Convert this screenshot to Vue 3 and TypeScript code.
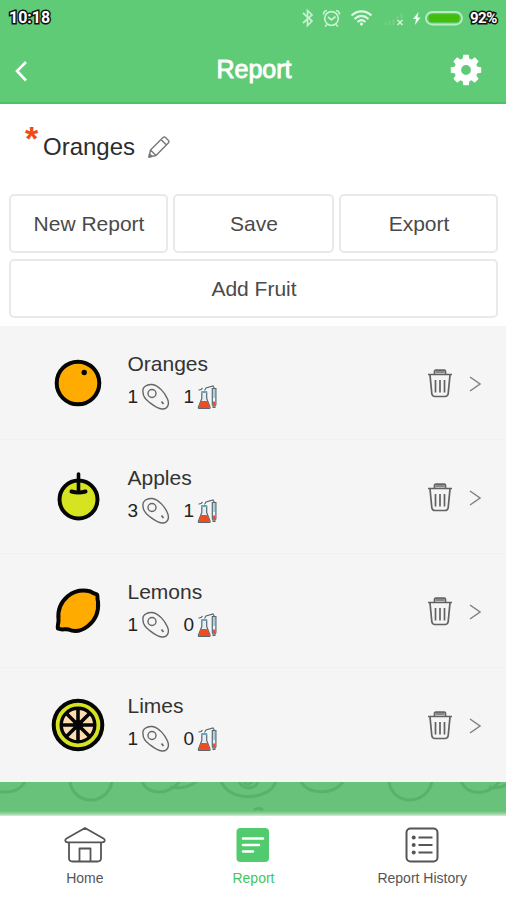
<script setup lang="ts">
type Kind = 'orange' | 'apple' | 'lemon' | 'lime'

interface FruitRow {
  name: string
  kind: Kind
  seeds: number
  tests: number
}

const rows: FruitRow[] = [
  { name: 'Oranges', kind: 'orange', seeds: 1, tests: 1 },
  { name: 'Apples', kind: 'apple', seeds: 3, tests: 1 },
  { name: 'Lemons', kind: 'lemon', seeds: 1, tests: 0 },
  { name: 'Limes', kind: 'lime', seeds: 1, tests: 0 },
]

const actions: string[] = ['New Report', 'Save', 'Export']
const teeth: number[] = [0, 45, 90, 135, 180, 225, 270, 315]
const spokes: number[] = [0, 45, 90, 135]
</script>

<template>
  <div class="screen">
    <header class="top">
      <div class="status">
        <span class="outlined time">10:18</span>
        <svg class="status-icons" width="168" height="24" viewBox="0 0 168 24" fill="none">
          <g stroke="#c9f2d0" stroke-width="1.7">
            <path d="M6 7l9 8-4.500 4.500v-15l4.500 4.500-9 8" transform="translate(-2 0)" />
            <circle cx="32.500" cy="12.500" r="6.800" />
            <path d="M29 11l3.500 3 4-3.500M24.500 8.500c0-2 1.500-3.700 3.500-4M40.500 8.500c0-2-1.500-3.700-3.500-4M28 18.500l-2 2M37 18.500l2 2" />
          </g>
          <g stroke="#dcf8e0" stroke-width="2.100">
            <path d="M52.500 9.500c6-5.500 14-5.500 20 0M55.500 13c4.500-4 9.500-4 14 0M58.500 16c2.500-2.300 5.500-2.300 8 0" />
            <circle cx="62.500" cy="18" r="1.200" fill="#dcf8e0" stroke-width="1" />
          </g>
          <path d="M86.500 19v-2.500M90.500 19v-4M94.500 19v-6M98.500 13v-3M102.500 12V7" stroke="#76d186" stroke-width="2" />
          <path d="M98.500 14l5 5m0-5l-5 5" stroke="#d4f5d9" stroke-width="1.500" />
          <path d="M119.500 6l-5.500 7h3l-1 6 5.500-7.500h-3z" fill="#effcf1" />
          <rect x="127" y="6" width="36" height="12.500" rx="6.200" stroke="#b9edc1" stroke-width="1.800" />
          <rect x="129.500" y="8.300" width="31" height="8" rx="3.500" fill="#43bd0b" />
        </svg>
        <span class="outlined battery">92%</span>
      </div>
      <div class="nav">
        <svg class="back" width="16" height="24" viewBox="0 0 16 24" fill="none" stroke="#fff" stroke-width="2.600">
          <path d="M13 3L4 12l9 9.500" />
        </svg>
        <h1>Report</h1>
        <svg class="gear" width="32" height="32" viewBox="-16 -16 32 32">
          <circle r="8.300" fill="none" stroke="#fff" stroke-width="6.800" />
          <path
            v-for="a in teeth"
            :key="a"
            d="M-3.600-10L-2.700-15.200H2.700L3.600-10z"
            fill="#fff"
            :transform="`rotate(${a})`"
          />
        </svg>
      </div>
    </header>

    <section class="report-name">
      <span class="star">*</span>
      <h2>Oranges</h2>
      <svg class="pencil" width="24" height="24" viewBox="0 0 24 24" fill="none" stroke="#777" stroke-width="1.400" stroke-linejoin="round">
        <path d="M2 22l1.500-7L16 2.500q1.200-1.200 2.500 0l3 3q1 1.200 0 2.300L9 20.500zM3.500 15l5.500 5.500M14 4.500l5.500 5.500" />
        <path d="M2 22l.6-3 2.400 2.400z" fill="#777" />
      </svg>
    </section>

    <section class="actions">
      <button v-for="label in actions" :key="label" type="button">{{ label }}</button>
      <button class="wide" type="button">Add Fruit</button>
    </section>

    <ul class="list">
      <li v-for="row in rows" :key="row.name">
        <svg class="fruit" width="56" height="60" viewBox="-28 -30 56 60" stroke="#050505" stroke-linecap="round" stroke-linejoin="round">
          <g v-if="row.kind === 'orange'">
            <circle cx="0" cy="0" r="21.300" fill="#ffab00" stroke-width="4" />
            <circle cx="6.200" cy="-10.500" r="2.700" fill="#050505" stroke="none" />
          </g>
          <g v-else-if="row.kind === 'apple'">
            <circle cx=".5" cy="2.500" r="19" fill="#d5e321" stroke-width="4" />
            <path d="M.5-23V-5" fill="none" stroke-width="3.600" />
            <path d="M-6.500-5.500q7 2 14 0" fill="none" stroke-width="4" />
          </g>
          <g v-else-if="row.kind === 'lemon'" stroke-width="4">
            <path
              d="M12.500-19.500C14.500-18 17-17.500 19-16.500C20-14 19-12 20-9.500C21 1 17 9.500 10 15C3 20.500-4 21-9.500 18.500C-13 17.500-16 19.500-20 17.500C-21 14.500-19 12-19.500 8C-20.500-2-16-10-10-15C-3-20.500 5-21.500 12.500-19.500z"
              fill="#ffab00"
            />
          </g>
          <g v-else>
            <circle r="24.300" fill="#d5e321" stroke-width="4" />
            <circle r="16.800" fill="#ffdcb0" stroke-width="3.400" />
            <path v-for="a in spokes" :key="a" d="M0-16V16" stroke-width="3.600" :transform="`rotate(${a})`" />
            <circle r="5" fill="#050505" stroke="none" />
          </g>
        </svg>
        <div class="info">
          <h3>{{ row.name }}</h3>
          <div class="counts">
            <span>{{ row.seeds }}</span>
            <svg class="seed" width="30" height="28" viewBox="0 0 30 28" fill="none" stroke="#666" stroke-width="1.400">
              <path d="M2 9C1 4 6 1 11 1.500C18 2.500 24 10 26.500 16C29 22 26 26.500 21 26C16 25.500 12 22 8 19C4 16 2 13 2 9z" />
              <circle cx="11" cy="10.500" r="4" />
              <path d="M20.500 18.500l2 2.500" stroke-width="1.700" />
            </svg>
            <span class="second">{{ row.tests }}</span>
            <svg class="lab" width="22" height="26" viewBox="0 0 22 26" fill="none">
              <path d="M4.800 8.500v6L1.500 23q-.5 1.500 1 1.500h9.500q1.500 0 1-1.500l-3.300-8.500v-6" fill="#e6edf0" stroke="#5a676f" stroke-width="1.200" />
              <path d="M4 17h6.500l2.300 6.300q0 .8-.8.800H2.500q-1 0-.6-1z" fill="#ef4d20" />
              <path d="M4.200 8h6" stroke="#68a5b8" stroke-width="2" />
              <path d="M1.500 6q3 .2 4-2M7.500 6.500L9 4l7-2 1.500 2.500" stroke="#53656d" stroke-width="1.100" />
              <path d="M15.300 4.500v16q0 1 .8 1v2h1.800v-2q1 0 1-1v-16z" fill="#f2f5f7" stroke="#5a676f" stroke-width="1.200" />
              <path d="M17.100 5v9" stroke="#84bdd0" stroke-width="1.300" />
              <path d="M17.100 17.500v4" stroke="#de4a36" stroke-width="2" />
            </svg>
          </div>
        </div>
        <svg class="trash" width="26" height="30" viewBox="0 0 26 30" fill="none" stroke="#626262" stroke-width="1.700" stroke-linejoin="round">
          <path d="M1 5.500h24M7.500 5V2.500q0-1.300 1.300-1.300h8.400q1.300 0 1.300 1.300V5M3 6l1.800 18.500q.4 3 3.200 3h10q2.800 0 3.200-3L23 6" />
          <path d="M8.500 11v12.500M13 11v12.500M17.500 11v12.500" />
          <path d="M8.500 3h9" stroke-width="2.600" stroke="#888" />
        </svg>
        <svg class="chevron" width="14" height="18" viewBox="0 0 14 18" fill="none" stroke="#808080" stroke-width="1.500">
          <path d="M2 2l10 7-10 7" />
        </svg>
      </li>
    </ul>

    <div class="backdrop">
      <svg width="506" height="34" viewBox="0 0 506 34" fill="none" stroke="#58b26a" stroke-width="3">
        <path d="M0 9.500q17 3 25-9.500M70 0c4 24 37 24 42 0M142 0c7 13 26 14 38-1M170 5q17 3 27-6M221 0c9 17 32 18 48 9q4-3 7-9M239 0c5 8 15 8 19 0M301 0c8 13 32 13 42 0M389 0c4 24 37 24 43 0M461 0c8 14 26 14 38 0M489 5q10 2 17-2M244 0q4 5 8 0M254 28q5-3 9 0" />
      </svg>
    </div>

    <nav class="tabs">
      <a>
        <svg width="42" height="38" viewBox="0 0 42 38" fill="none" stroke="#555" stroke-width="1.800" stroke-linejoin="round">
          <path d="M21 2L2.500 12.500q-1.500 1-1.200 2.300.4 1.500 2.200 1.500h35q1.800 0 2.200-1.500.3-1.300-1.200-2.300zM5 16.500V32q0 3.500 3.500 3.500h25Q37 35.500 37 32V16.500M15.500 35V22.500h11V35" />
        </svg>
        <span>Home</span>
      </a>
      <a class="active">
        <svg width="42" height="38" viewBox="0 0 42 38">
          <rect x="4.500" y="2" width="32.500" height="34" rx="4" fill="#51cb6d" />
          <path d="M11 12.500h20M11 19h16M11 25.500h10" stroke="#fff" stroke-width="2.600" stroke-linecap="round" />
        </svg>
        <span>Report</span>
      </a>
      <a>
        <svg width="42" height="38" viewBox="0 0 42 38" fill="none" stroke="#555">
          <rect x="5.500" y="2.500" width="31" height="33" rx="4" stroke-width="2" />
          <path d="M17.500 11.500h14M17.500 19h14M17.500 26.500h14" stroke-width="2.100" />
          <g fill="#555" stroke="none">
            <circle cx="12.700" cy="11.500" r="2" />
            <circle cx="12.700" cy="19" r="2" />
            <circle cx="12.700" cy="26.500" r="2" />
          </g>
        </svg>
        <span>Report History</span>
      </a>
    </nav>
  </div>
</template>

<style>
body {
  margin: 0;
  background: #fff;
}
</style>

<style scoped>
.screen {
  width: 506px;
  height: 900px;
  display: flex;
  flex-direction: column;
  overflow: hidden;
  background: #fff;
  font-family: 'Liberation Sans', Arial, sans-serif;
}
h1, h2, h3, ul {
  margin: 0;
  padding: 0;
  font-weight: 400;
}
svg {
  display: block;
  flex: none;
}
.top {
  height: 104px;
  flex: none;
  box-sizing: border-box;
  background: #5fcb76;
  border-bottom: 2px solid #4dc368;
}
.status {
  height: 36px;
  display: flex;
  align-items: center;
  padding: 0 8px 0 9px;
}
.outlined {
  font: 700 16px/20px Roboto, sans-serif;
  color: #fff;
  -webkit-text-stroke: 3px #111;
  paint-order: stroke fill;
}
.time {
  width: 42px;
}
.battery {
  font-size: 15px;
  letter-spacing: -0.5px;
}
.status-icons {
  margin-left: 248px;
  margin-right: 3px;
  margin-top: -1px;
}
.nav {
  height: 66px;
  display: grid;
  grid-template-columns: 60px 1fr 60px;
  align-items: center;
}
.back {
  margin-left: 13px;
  margin-top: 3px;
}
.nav h1 {
  padding-left: 2px;
  font-size: 25px;
  line-height: 30px;
  color: #fff;
  text-align: center;
  -webkit-text-stroke: 0.9px #fff;
}
.gear {
  margin-left: 4px;
  margin-top: 1px;
}
.report-name {
  height: 90px;
  flex: none;
  display: flex;
  align-items: center;
  box-sizing: border-box;
  padding: 0 0 5px 25px;
}
.star {
  width: 18px;
  margin-bottom: 17px;
  font-size: 34px;
  line-height: 34px;
  font-weight: 700;
  color: #ee4b16;
}
.report-name h2 {
  font-size: 24px;
  line-height: 30px;
  color: #2c2c2c;
}
.pencil {
  margin-left: 12px;
}
.actions {
  height: 132px;
  flex: none;
  box-sizing: border-box;
  padding: 0 8px 8px 9px;
  display: grid;
  grid-template-columns: 159px 161px 159px;
  grid-template-rows: 59px 59px;
  column-gap: 5px;
  row-gap: 6px;
}
.actions button {
  border: 2px solid #e9e9e9;
  border-radius: 5px;
  background: #fff;
  padding: 0 0 0 1px;
  font: 400 21px/24px 'Liberation Sans', Arial, sans-serif;
  color: #4a4a4a;
}
.actions .wide {
  grid-column: 1 / -1;
}
.list {
  list-style: none;
  background: #f5f5f5;
}
.list li {
  height: 114px;
  box-sizing: border-box;
  display: flex;
  align-items: center;
  padding: 1px 24px 0 50px;
  border-bottom: 1px solid #f1f1f1;
}
.list li:last-child {
  border-bottom-color: #f5f5f5;
}
.info {
  margin-left: 21.5px;
  flex: 1;
  align-self: flex-start;
  padding-top: 25px;
}
.info h3 {
  font-size: 21px;
  line-height: 24px;
  color: #333;
}
.counts {
  display: flex;
  align-items: center;
  height: 30px;
  margin-top: 6px;
  font-size: 19px;
  line-height: 30px;
  color: #222;
}
.counts span {
  width: 11px;
  margin-top: -1px;
}
.seed {
  margin-left: 2px;
}
.counts .second {
  margin-left: 13px;
  width: 12px;
}
.lab {
  margin-left: 1px;
}
.trash {
  margin-top: 2px;
  margin-right: 15px;
}
.chevron {
  margin-top: 1px;
}
.backdrop {
  height: 34px;
  flex: none;
  background: linear-gradient(#69c279 0 29px, #9ed5a7 32px, #d8ecdb 34px);
}
.tabs {
  height: 84px;
  display: grid;
  grid-template-columns: repeat(3, 1fr);
  background: #fff;
}
.tabs a {
  display: flex;
  flex-direction: column;
  align-items: center;
  padding-top: 10px;
  padding-left: 1px;
  font-size: 14px;
  line-height: 18px;
  color: #555;
}
.tabs span {
  margin-top: 5px;
}
.tabs .active {
  color: #43c65f;
}
</style>
